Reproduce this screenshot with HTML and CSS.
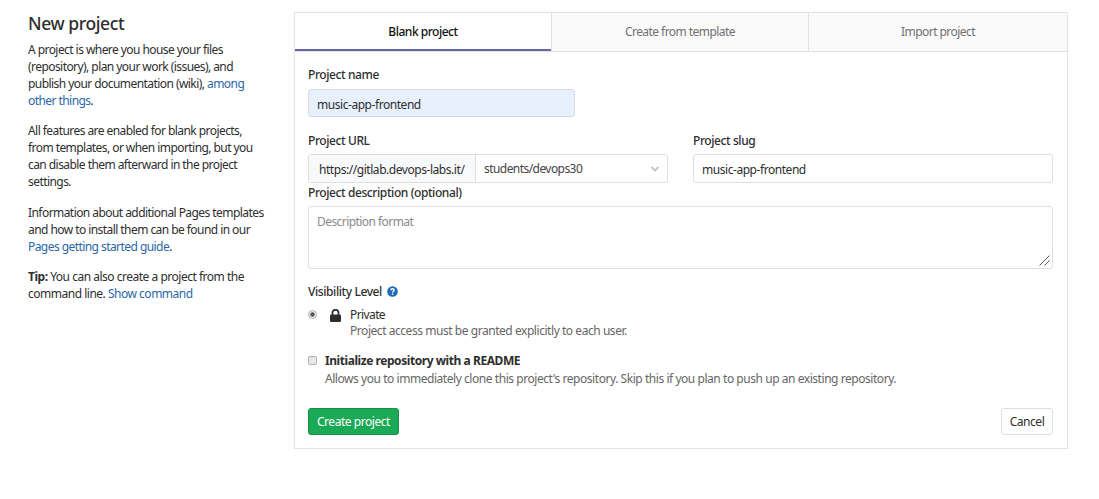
FILE: index.html
```
<!DOCTYPE html>
<html lang="en">
<head>
<meta charset="utf-8">
<title>New project</title>
<link rel="stylesheet" href="styles.css">
</head>
<body>
<div class="page">
  <aside class="intro">
    <h1><span>New project</span></h1>
    <p>A project is where you house your files<br>(repository), plan your work (issues), and<br>publish your documentation (wiki), <a>among<br>other things</a>.</p>
    <p class="features">All features are enabled for blank projects,<br>from templates, or when importing, but you<br>can disable them afterward in the project<br>settings.</p>
    <p>Information about additional Pages templates<br>and how to install them can be found in our<br><a>Pages getting started guide</a>.</p>
    <p class="tip"><b>Tip:</b> You can also create a project from the<br>command line. <a>Show command</a></p>
  </aside>
  <main class="panel">
    <nav class="tabs">
      <div class="tab active"><span>Blank project</span></div>
      <div class="tab"><span>Create from template</span></div>
      <div class="tab"><span>Import project</span></div>
    </nav>
    <form class="form">
      <div class="label"><span>Project name</span></div>
      <div class="field name"><span>music-app-frontend</span></div>
      <div class="columns">
        <div>
          <div class="label"><span>Project URL</span></div>
          <div class="url">
            <div class="prefix"><span>https://gitlab.devops-labs.it/</span></div>
            <div class="namespace"><span>students/devops30</span>
              <svg width="10" height="6" viewBox="0 0 10 6"><path d="M1.500 1 5 4.500 8.500 1" fill="none" stroke="#c4c4c4" stroke-width="1.900"/></svg>
            </div>
          </div>
        </div>
        <div>
          <div class="label"><span>Project slug</span></div>
          <div class="field"><span>music-app-frontend</span></div>
        </div>
      </div>
      <div class="label description"><span>Project description (optional)</span></div>
      <div class="textarea"><span>Description format</span>
        <svg class="grip" width="12" height="12" viewBox="0 0 12 12"><path d="M.5 10.500 10.500 .5M5.500 10.500 10.500 5.500" stroke="#555" fill="none"/></svg>
      </div>
      <div class="label visibility"><span>Visibility Level</span>
        <svg width="11" height="11" viewBox="0 0 11 11"><circle cx="5.500" cy="5.500" r="5.300" fill="#1f69b8"/><path d="M3.900 4.300C3.900 2.200 7.200 2.300 7.100 4.200 7 5.200 5.600 5.300 5.600 6.600" fill="none" stroke="#fff" stroke-width="1.400"/><path d="M4.900 7.400h1.400v1.400H4.900z" fill="#fff"/></svg>
      </div>
      <div class="option">
        <svg class="control" width="9" height="9" viewBox="0 0 9 9"><circle cx="4.500" cy="4.500" r="4" fill="#eee" stroke="#b0b0b0"/><circle cx="4.500" cy="4.500" r="2.200" fill="#555"/></svg>
        <svg class="lock" width="11" height="13" viewBox="0 0 11 13"><path d="M2.500 6V3.800a3 3 0 0 1 6 0V6" fill="none" stroke="#2e2e2e" stroke-width="1.700"/><rect y="5.600" width="11" height="7.400" rx="1.200" fill="#2e2e2e"/></svg>
        <div><div class="line private"><span>Private</span></div><div class="line muted"><span>Project access must be granted explicitly to each user.</span></div></div>
      </div>
      <div class="option readme">
        <div class="checkbox"></div>
        <div><div class="line strong"><b>Initialize repository with a README</b></div><div class="line muted"><span>Allows you to immediately clone this project's repository. Skip this if you plan to push up an existing repository.</span></div></div>
      </div>
      <div class="actions"><div class="button create"><span>Create project</span></div><div class="button"><span>Cancel</span></div></div>
    </form>
  </main>
</div>
</body>
</html>
```
FILE: styles.css
```
* { box-sizing: border-box; }
body { margin: 0; background: #fff; color: #2e2e2e; font: 12px/17px "Noto Sans", sans-serif; letter-spacing: -.45px; white-space: nowrap; }
svg { display: block; flex: none; }
.page { display: flex; padding: 12px 31px 0 28px; }
.intro { width: 266px; flex: none; letter-spacing: -.56px; }
h1 { margin: 0 0 6px; font-size: 17.5px; line-height: 23px; font-weight: 500; letter-spacing: -.4px; }
p { margin: 0 0 13px; }
.features { margin-bottom: 14px; }
.tip { letter-spacing: -.49px; }
a { color: #2a67a8; }
.panel { width: 774px; height: 437px; border: 1px solid #e2e2e2; }
.tabs { display: grid; grid-template-columns: 256px 257px 1fr; height: 39px; border-bottom: 1px solid #e2e2e2; }
.tab { display: flex; align-items: center; justify-content: center; background: #fafafa; color: #707070; border-left: 1px solid #e2e2e2; padding-bottom: 2px; letter-spacing: -.55px; }
.tab.active { background: #fff; color: #111; font-weight: 500; border-left: 0; border-bottom: 2px solid #6666a8; padding: 0; letter-spacing: -.48px; }
.form { display: flex; flex-direction: column; padding: 13px 14px 0 13px; }
.label { height: 17px; padding-top: 1px; font-weight: 500; letter-spacing: -.41px; }
.field { height: 29px; border: 1px solid #dedede; border-radius: 3px; padding: 8px 8px 6px; display: flex; align-items: center; }
.name { width: 267px; height: 28px; margin-top: 7px; margin-bottom: 14px; background: #e8f0fe; border-color: #d5dce8; }
.columns { display: grid; grid-template-columns: 360px 360px; justify-content: space-between; }
.columns .label { height: 23px; }
.url { display: flex; height: 29px; border: 1px solid #dedede; border-radius: 3px; }
.prefix { width: 167px; padding: 6px 10px; background: #f8f9fb; border-right: 1px solid #dedede; }
.namespace { flex: 1; display: flex; align-items: center; justify-content: space-between; padding: 0 7px 0 8px; color: #444; letter-spacing: -.56px; }
.description { height: 23px; }
.textarea { height: 63px; border: 1px solid #dedede; border-radius: 3px; padding: 6px 1px 1px 8px; color: #8a8a8a; display: flex; justify-content: space-between; letter-spacing: -.56px; }
.grip { align-self: flex-end; }
.visibility { display: flex; align-items: center; gap: 5px; margin-top: 13px; margin-bottom: 1px; }
.option { display: flex; margin-top: 7px; }
.control { margin: 3px 13px 0 0; }
.lock { margin: 2px 9px 0 0; }
.line { height: 16px; line-height: 16px; }
.private { letter-spacing: -.6px; }
.muted { color: #666; }
.readme { margin-top: 13px; }
.strong { letter-spacing: -.44px; }
.readme .line { height: 18px; line-height: 18px; }
.checkbox { width: 9px; height: 9px; margin: 4px 8px 0 0; border: 1px solid #b0b0b0; border-radius: 2px; background: #e8e8e8; }
.actions { display: flex; justify-content: space-between; margin-top: 20px; }
.button { width: 52px; height: 27px; border: 1px solid #dedede; border-radius: 3px; display: flex; align-items: center; justify-content: center; }
.create { width: 91px; background: #1aaa55; border-color: #168f48; color: #fff; }
```
